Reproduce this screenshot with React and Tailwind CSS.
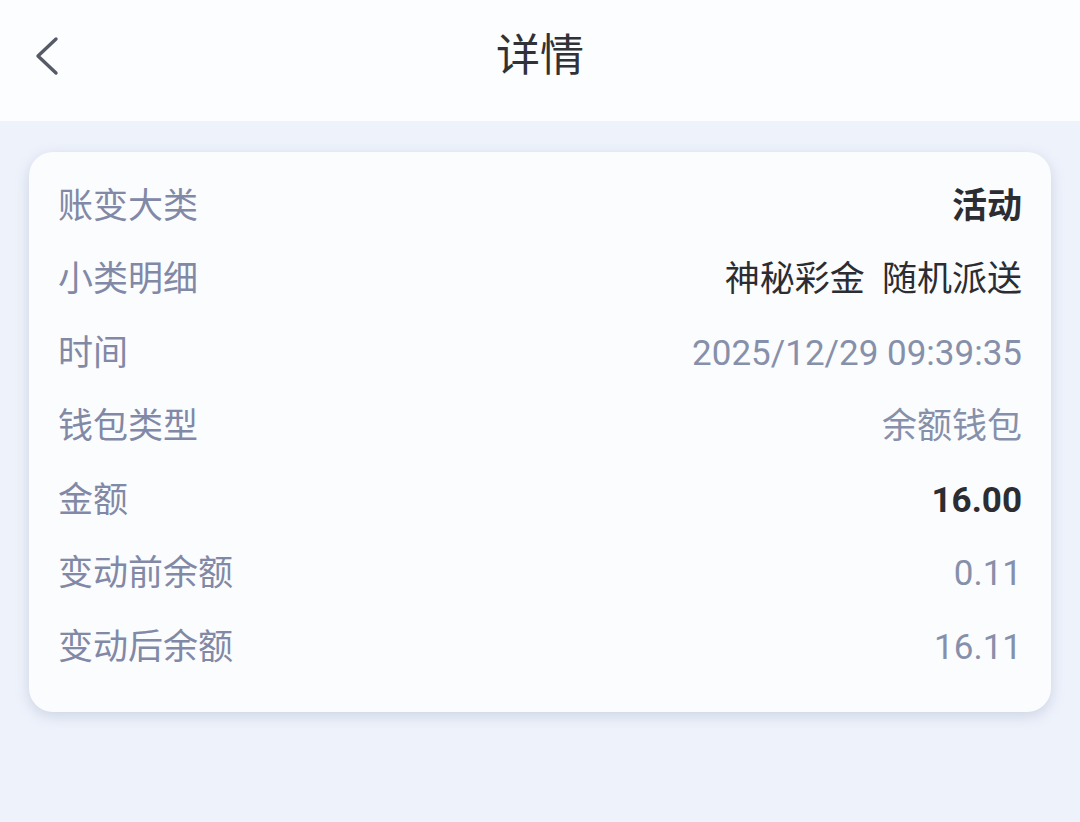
import React from 'react';

const rows = [
    { label: '账变大类', value: '活动', style: 'font-bold text-[#2b2d33]' },
    { label: '小类明细', value: '神秘彩金  随机派送', style: 'text-[#2b2d33] whitespace-pre' },
    { label: '时间', value: '2025/12/29 09:39:35', style: 'text-[#8790aa]' },
    { label: '钱包类型', value: '余额钱包', style: 'text-[#8790aa]' },
    { label: '金额', value: '16.00', style: 'font-bold text-[#2b2d33]' },
    { label: '变动前余额', value: '0.11', style: 'text-[#8790aa]' },
    { label: '变动后余额', value: '16.11', style: 'text-[#8790aa]' }
];

const BackIcon = () => (
    <svg width="28" height="44" viewBox="0 0 28 44" fill="none">
        <path d="M22 5 L4 22 L22 39" stroke="#565a66" strokeWidth="3.4" strokeLinecap="round" strokeLinejoin="round" />
    </svg>
);

export default function App() {
    return (
        <div className="w-[1080px] h-[822px] bg-[#eef2fb] font-['Roboto','Noto_Sans_CJK_SC',sans-serif] overflow-hidden">
            {/* Header */}
            <div className="relative h-[121px] bg-[#fcfdfe] flex items-center justify-center">
                <button className="absolute left-[34px] top-[34px]">
                    <BackIcon />
                </button>
                <h1 className="text-[44px] text-[#303238] -mt-[9px]">详情</h1>
            </div>

            {/* Detail card */}
            <div className="mx-[29px] mt-[31px] rounded-[24px] bg-[#fbfcfe] shadow-[0_4px_14px_rgba(120,135,170,0.28)] pl-[29px] pr-[29px] pt-[18px] pb-[27px]">
                {rows.map((row) => (
                    <div key={row.label} className="h-[73.5px] flex items-center justify-between text-[35px]">
                        <span className="text-[#8189a6]">{row.label}</span>
                        <span className={row.style}>{row.value}</span>
                    </div>
                ))}
            </div>
        </div>
    );
}
